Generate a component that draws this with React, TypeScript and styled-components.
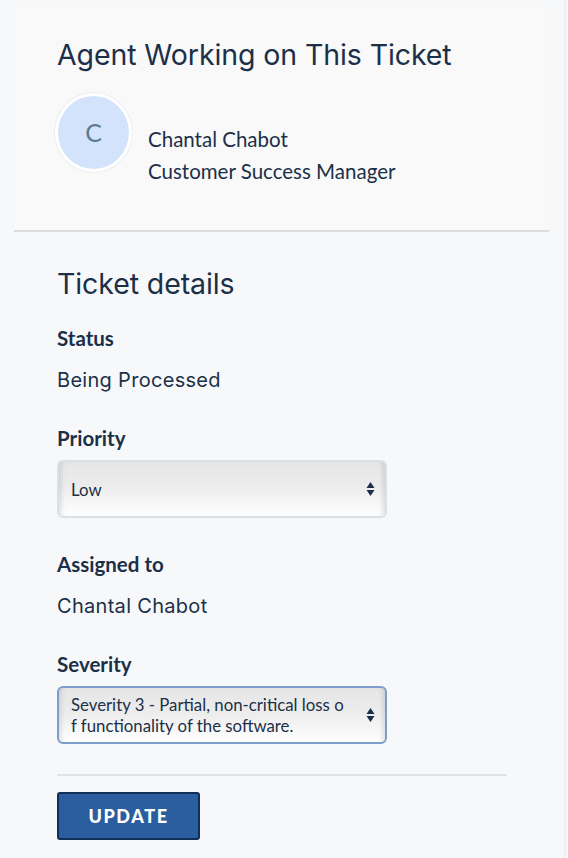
import React from "react";
import styled, { createGlobalStyle } from "styled-components";

const Global = createGlobalStyle`
  html, body { margin: 0; padding: 0; background: #f7f8fa; }
  body { font-family: "Lato", "Open Sans", sans-serif; color: #1b3048; }
`;

const Page = styled.div`
  width: 566px;
  min-height: 858px;
  border-right: 2px solid #eceef1;
  box-sizing: border-box;
  padding-top: 5px;
`;

const AgentCard = styled.section`
  margin: 0 15px 0 14px;
  background: #f9f9fa;
  border-bottom: 2px solid #dcdcdc;
  padding: 33px 43px 43px;
`;

const Heading = styled.h2`
  margin: 0;
  font-family: "Inter", "Open Sans", sans-serif;
  font-weight: 400;
  font-size: 28.5px;
  line-height: 34px;
  color: #1b3048;
  letter-spacing: -0.1px;
`;

const AgentRow = styled.div`
  display: flex;
  align-items: flex-start;
  gap: 16px;
  margin-top: 21px;
  margin-left: -2px;
`;

const Avatar = styled.div`
  width: 71px;
  height: 71px;
  border-radius: 50%;
  background: #d3e3fc;
  border: 3px solid #ffffff;
  box-shadow: 0 0 0 1px #eceeef;
  display: flex;
  align-items: center;
  justify-content: center;
  padding-bottom: 2px;
  box-sizing: content-box;
  font-family: "Lato", sans-serif;
  font-size: 25px;
  color: #5c7b91;
  flex-shrink: 0;
`;

const AgentInfo = styled.div`
  display: flex;
  flex-direction: column;
  padding-top: 30px;
  font-size: 20.5px;
  line-height: 32px;
  color: #1b3048;
`;

const Details = styled.section`
  padding: 35px 0 0 57px;
  width: 450px;
`;

const Fields = styled.div`
  display: flex;
  flex-direction: column;
  gap: 34px;
  margin-top: 25px;
`;

const Field = styled.div``;

const Label = styled.div`
  font-family: "Lato", sans-serif;
  font-weight: 700;
  font-size: 20.5px;
  line-height: 24px;
  color: #1b3048;
`;

const Value = styled.div`
  margin-top: 18px;
  font-family: "Inter", "Open Sans", sans-serif;
  font-size: 20px;
  letter-spacing: 0.3px;
  line-height: 24px;
  color: #1b3048;
`;

const SelectBox = styled.div<{ $focused?: boolean }>`
  margin-top: 10px;
  width: 330px;
  height: 58px;
  box-sizing: border-box;
  border-radius: 6px;
  border: ${(p) => (p.$focused ? "2px solid #7d9ecb" : "2px solid #dbe0e5")};
  background: linear-gradient(#e6e6e6 0%, #ececec 45%, #ffffff 100%);
  box-shadow: inset 6px 0 5px -4px rgba(0, 0, 0, 0.12),
    inset -6px 0 5px -4px rgba(0, 0, 0, 0.12);
  display: flex;
  align-items: center;
  justify-content: space-between;
  padding: 0 10px 0 12px;
  font-family: "Lato", sans-serif;
  font-size: 16.8px;
  line-height: 21px;
  color: #1b3048;
`;

const SelectText = styled.div`
  display: flex;
  flex-direction: column;
`;

const Arrows = () => (
  <svg width="9" height="16" viewBox="0 0 9 16">
    <path d="M4.5 1 L8.5 7 L0.5 7 Z" fill="#1b3048" />
    <path d="M4.5 15 L8.5 9 L0.5 9 Z" fill="#1b3048" />
  </svg>
);

const Divider = styled.hr`
  margin: 30px 0 0;
  border: none;
  border-top: 2px solid #e2e3e6;
`;

const Button = styled.button`
  margin-top: 16px;
  width: 143px;
  height: 48px;
  background: #2a5e9e;
  border: 2px solid #122f55;
  border-radius: 3px;
  color: #ffffff;
  font-family: "Lato", sans-serif;
  font-weight: 900;
  font-size: 18px;
  letter-spacing: 1.6px;
  padding: 0;
`;

export default function App() {
  return (
    <Page>
      <Global />
      <AgentCard>
        <Heading>Agent Working on This Ticket</Heading>
        <AgentRow>
          <Avatar>C</Avatar>
          <AgentInfo>
            <span>Chantal Chabot</span>
            <span>Customer Success Manager</span>
          </AgentInfo>
        </AgentRow>
      </AgentCard>
      <Details>
        <Heading>Ticket details</Heading>
        <Fields>
          <Field>
            <Label>Status</Label>
            <Value>Being Processed</Value>
          </Field>
          <Field>
            <Label>Priority</Label>
            <SelectBox>
              <SelectText>Low</SelectText>
              <Arrows />
            </SelectBox>
          </Field>
          <Field>
            <Label>Assigned to</Label>
            <Value>Chantal Chabot</Value>
          </Field>
          <Field>
            <Label>Severity</Label>
            <SelectBox $focused>
              <SelectText>
                <span>Severity 3 - Partial, non-critical loss o</span>
                <span>f functionality of the software.</span>
              </SelectText>
              <Arrows />
            </SelectBox>
          </Field>
        </Fields>
        <Divider />
        <Button>UPDATE</Button>
      </Details>
    </Page>
  );
}
